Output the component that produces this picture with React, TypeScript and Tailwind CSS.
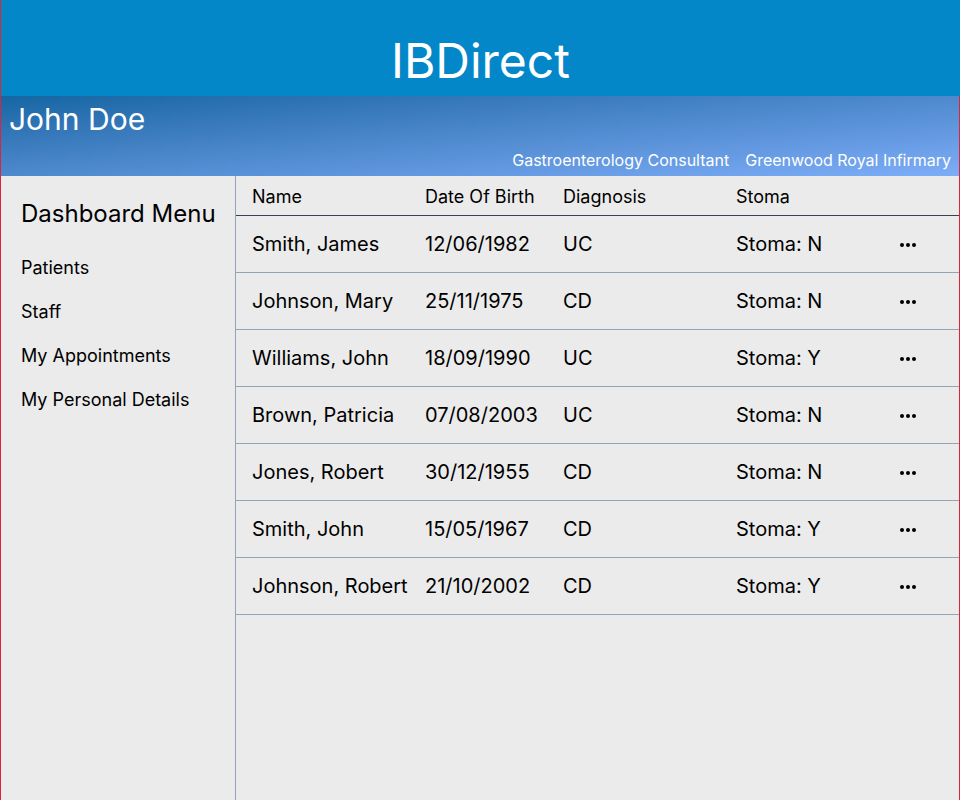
const patients = [
  { name: 'Smith, James', dob: '12/06/1982', diagnosis: 'UC', stoma: 'N' },
  { name: 'Johnson, Mary', dob: '25/11/1975', diagnosis: 'CD', stoma: 'N' },
  { name: 'Williams, John', dob: '18/09/1990', diagnosis: 'UC', stoma: 'Y' },
  { name: 'Brown, Patricia', dob: '07/08/2003', diagnosis: 'UC', stoma: 'N' },
  { name: 'Jones, Robert', dob: '30/12/1955', diagnosis: 'CD', stoma: 'N' },
  { name: 'Smith, John', dob: '15/05/1967', diagnosis: 'CD', stoma: 'Y' },
  { name: 'Johnson, Robert', dob: '21/10/2002', diagnosis: 'CD', stoma: 'Y' },
]

const menu = ['Patients', 'Staff', 'My Appointments', 'My Personal Details']

const Dots = () => (
  <svg width="16" height="4" viewBox="0 0 16 4" className="fill-black mt-[2px]">
    <circle cx="2" cy="2" r="2" />
    <circle cx="8" cy="2" r="2" />
    <circle cx="14" cy="2" r="2" />
  </svg>
)

const App = () => {
  return (
    <div className="min-h-[800px] flex flex-col bg-[#ebebeb] border-l border-[#d9263a] font-['Inter','Liberation_Sans',sans-serif] text-black">
      <header className="h-[96px] bg-[#0487c8] flex items-center justify-center">
        <h1 className="text-5xl text-white pt-[26px]">IBDirect</h1>
      </header>
      <div className="flex-1 flex flex-col border-r border-[#d9263a]">
        <div className="h-[80px] bg-linear-to-br from-[#1466a4] to-[#7dadf8] flex flex-col justify-between pl-[8px] pr-[8px] pb-[4px] text-white">
          <p className="text-3xl pt-[5px]">John Doe</p>
          <div className="flex justify-end gap-4 text-base">
            <span>Gastroenterology Consultant</span>
            <span>Greenwood Royal Infirmary</span>
          </div>
        </div>
        <div className="flex-1 flex">
          <aside className="w-[235px] shrink-0 border-r border-[#94a3b8] pl-5 pt-[22px]">
            <h2 className="text-2xl mb-4">Dashboard Menu</h2>
            <ul className="flex flex-col">
              {menu.map((item) => (
                <li key={item} className="h-[44px] flex items-center text-lg">
                  {item}
                </li>
              ))}
            </ul>
          </aside>
          <main className="flex-1">
            <div className="h-[40px] grid grid-cols-[173px_138px_173px_164px_1fr] items-center pl-4 pt-[2px] border-b border-[#374151] text-lg">
              <span>Name</span>
              <span>Date Of Birth</span>
              <span>Diagnosis</span>
              <span>Stoma</span>
              <span />
            </div>
            {patients.map((p) => (
              <div
                key={p.name}
                className="h-[57px] grid grid-cols-[173px_138px_173px_164px_1fr] items-center pl-4 border-b border-[#94a3b8] text-xl"
              >
                <span>{p.name}</span>
                <span>{p.dob}</span>
                <span>{p.diagnosis}</span>
                <span>Stoma: {p.stoma}</span>
                <span className="flex">
                  <Dots />
                </span>
              </div>
            ))}
          </main>
        </div>
      </div>
    </div>
  )
}

export default App
